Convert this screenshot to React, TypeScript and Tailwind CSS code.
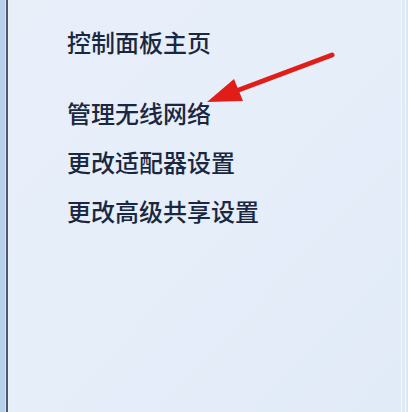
export default function App() {
  const links = [
    { label: "控制面板主页", gap: "mt-0" },
    { label: "管理无线网络", gap: "mt-[47px]" },
    { label: "更改适配器设置", gap: "mt-[25px]" },
    { label: "更改高级共享设置", gap: "mt-[25px]" },
  ];

  return (
    <div className="relative flex h-[412px] w-[408px] overflow-hidden bg-[#e5edf8]">
      {/* window frame edge */}
      <div className="w-[5px] bg-[#b9d0ec]" />
      <div className="w-[1px] bg-[#d6e3f3]" />
      <div className="w-[2px] bg-[#4d5a6e]" />
      <div className="w-[1px] bg-[#eef3fa]" />

      <div className="flex flex-1 flex-col bg-gradient-to-br from-[#e8eff9] via-[#e6eefa] to-[#e1eaf7] pl-[58px] pt-[30px]">
        {links.map((l) => (
          <a
            key={l.label}
            className={`${l.gap} block text-[24px] font-medium leading-[24px] text-[#1a2740] [font-family:'Noto_Sans_CJK_SC',sans-serif]`}
          >
            {l.label}
          </a>
        ))}
      </div>

      <div className="w-[1px] bg-[#f3f7fc]" />
      <div className="w-[3px] bg-[#dfe8f5]" />
      <div className="w-[1px] bg-[#f5f8fc]" />
      <div className="w-[2px] bg-[#dce6f3]" />

      {/* red annotation arrow */}
      <svg
        className="absolute left-0 top-0"
        width="408"
        height="412"
        viewBox="0 0 408 412"
      >
        <line
          x1="332"
          y1="55"
          x2="236"
          y2="91"
          stroke="#e11d1a"
          strokeWidth="5"
          strokeLinecap="round"
        />
        <polygon points="207,102 234,79 243,101" fill="#e11d1a" />
      </svg>
    </div>
  );
}
